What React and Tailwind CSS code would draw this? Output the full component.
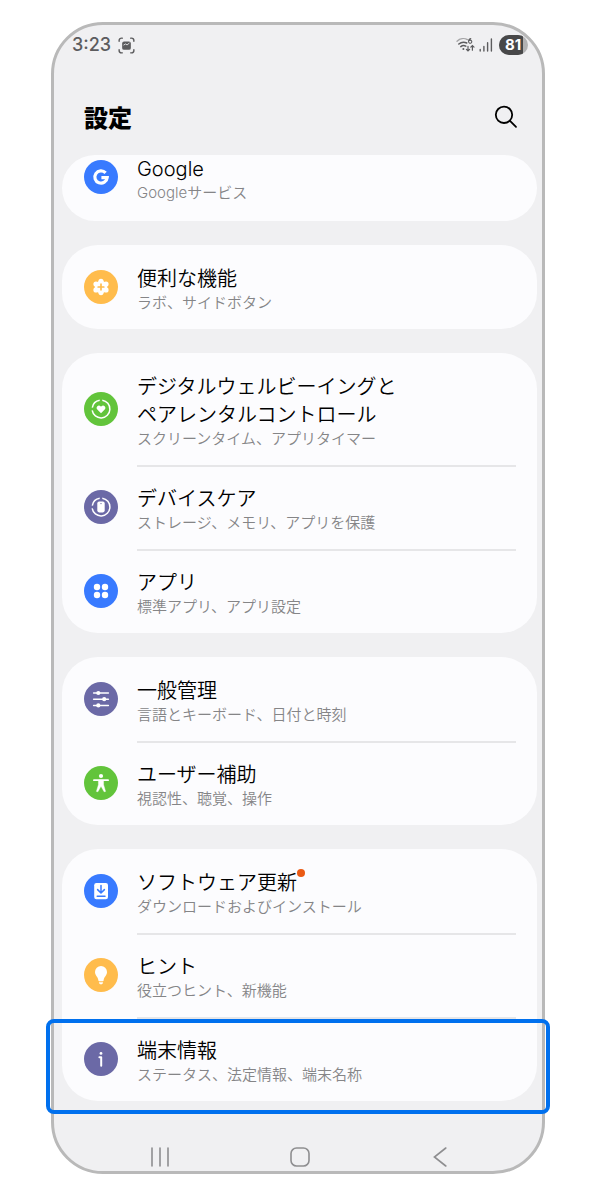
import React from 'react';

const BLUE = 'bg-[#387aff]';
const ORANGE = 'bg-[#ffbc4c]';
const GREEN = 'bg-[#62c43b]';
const PURPLE = 'bg-[#6b69a6]';

// all row icons are drawn on a 34x34 canvas, white on the coloured disc
const icons = {
  google: (
    <path d="M21.6 12.8A6.2 6.2 0 1 0 23.2 17.6H17.4" fill="none" stroke="#fff" strokeWidth="3.2" />
  ),
  features: (
    <g>
      <g fill="#fff">
        <circle cx="17" cy="11.4" r="2.6" />
        <circle cx="17" cy="22.6" r="2.6" />
        <circle cx="12" cy="14.1" r="2.6" />
        <circle cx="22" cy="14.1" r="2.6" />
        <circle cx="12" cy="19.9" r="2.6" />
        <circle cx="22" cy="19.9" r="2.6" />
        <circle cx="17" cy="17" r="6.2" />
      </g>
      <path d="M17 14.2v5.6M14.2 17h5.6" stroke="#ffbc4c" strokeWidth="1.7" strokeLinecap="round" />
    </g>
  ),
  wellbeing: (
    <g>
      <path d="M18.3 8.2A8.9 8.9 0 1 1 8.2 18.4M8.3 15.6A8.9 8.9 0 0 1 15.7 8.2" fill="none" stroke="#fff" strokeWidth="1.5" />
      <path d="M17 21.2l-3.7-3.6a2.3 2.3 0 0 1 0-3.3 2.3 2.3 0 0 1 3.3 0l.4.4.4-.4a2.3 2.3 0 0 1 3.3 0 2.3 2.3 0 0 1 0 3.3z" fill="#fff" />
    </g>
  ),
  care: (
    <g>
      <path d="M18.3 8.2A8.9 8.9 0 1 1 8.2 18.4M8.3 15.6A8.9 8.9 0 0 1 15.7 8.2" fill="none" stroke="#fff" strokeWidth="1.5" />
      <rect x="13.3" y="11.6" width="7.4" height="10.8" rx="1.8" fill="#fff" />
      <circle cx="17" cy="13.6" r="0.7" fill="#6b69a6" />
    </g>
  ),
  apps: (
    <g fill="#fff">
      <circle cx="13" cy="13" r="3.2" />
      <circle cx="21" cy="13" r="3.2" />
      <circle cx="13" cy="21" r="3.2" />
      <circle cx="21" cy="21" r="3.2" />
    </g>
  ),
  general: (
    <g>
      <path d="M9.6 11h14.8M9.6 17.2h14.8M9.6 23.4h14.8" stroke="#fff" strokeWidth="1.5" strokeLinecap="round" />
      <circle cx="14.3" cy="11" r="2.1" fill="#fff" />
      <circle cx="20.2" cy="17.2" r="2.1" fill="#fff" />
      <circle cx="14.3" cy="23.4" r="2.1" fill="#fff" />
    </g>
  ),
  accessibility: (
    <g>
      <circle cx="17" cy="10" r="2.1" fill="#fff" />
      <path d="M9.9 14.2h14.2" stroke="#fff" strokeWidth="1.7" strokeLinecap="round" />
      <path d="M14.4 14h5.2v4.8l2 6.6-1.5.4-3.1-5.6-3.1 5.6-1.5-.4 2-6.6z" fill="#fff" stroke="#fff" strokeWidth="0.4" strokeLinejoin="round" />
    </g>
  ),
  update: (
    <g>
      <rect x="10.2" y="9" width="13.8" height="16.2" rx="2.2" fill="#fff" />
      <path d="M17 11.6v7.2M13.6 15.6l3.4 3.4 3.4-3.4M13.2 22.2h7.8" fill="none" stroke="#387aff" strokeWidth="1.5" strokeLinecap="round" strokeLinejoin="round" />
    </g>
  ),
  tips: (
    <g fill="#fff">
      <path d="M17 8a6 6 0 0 0-6 6c0 3.6 3 4.6 3.4 8.6a.8.8 0 0 0 .8.7h3.6a.8.8 0 0 0 .8-.7c.4-4 3.4-5 3.4-8.6a6 6 0 0 0-6-6z" />
      <path d="M14.9 24.3h4.2a2.1 2.1 0 0 1-4.2 0z" />
    </g>
  ),
  about: (
    <g>
      <circle cx="17" cy="11.4" r="1.4" fill="#fff" />
      <path d="M15.4 15.2h1.8v8.6" fill="none" stroke="#fff" strokeWidth="2" strokeLinecap="round" strokeLinejoin="round" />
    </g>
  ),
};

const groups = [
  [{ id: 'google', color: BLUE, title: ['Google'], sub: 'Googleサービス' }],
  [{ id: 'features', color: ORANGE, title: ['便利な機能'], sub: 'ラボ、サイドボタン' }],
  [
    { id: 'wellbeing', color: GREEN, title: ['デジタルウェルビーイングと', 'ペアレンタルコントロール'], sub: 'スクリーンタイム、アプリタイマー' },
    { id: 'care', color: PURPLE, title: ['デバイスケア'], sub: 'ストレージ、メモリ、アプリを保護' },
    { id: 'apps', color: BLUE, title: ['アプリ'], sub: '標準アプリ、アプリ設定' },
  ],
  [
    { id: 'general', color: PURPLE, title: ['一般管理'], sub: '言語とキーボード、日付と時刻' },
    { id: 'accessibility', color: GREEN, title: ['ユーザー補助'], sub: '視認性、聴覚、操作' },
  ],
  [
    { id: 'update', color: BLUE, title: ['ソフトウェア更新'], sub: 'ダウンロードおよびインストール', badge: true },
    { id: 'tips', color: ORANGE, title: ['ヒント'], sub: '役立つヒント、新機能' },
    { id: 'about', color: PURPLE, title: ['端末情報'], sub: 'ステータス、法定情報、端末名称', highlight: true },
  ],
];

function Row({ item, divider }) {
  return (
    <li className="relative">
      <button className="flex w-full items-center gap-[19px] pl-[22px] pr-[21px] text-left">
        <span className={`size-[34px] shrink-0 rounded-full ${item.color}`}>
          <svg viewBox="0 0 34 34" className="size-full" aria-hidden="true">{icons[item.id]}</svg>
        </span>
        <span className={`flex-1 pb-4 ${divider ? 'border-t-2 border-[#e6e6e8] pt-[18px]' : 'pt-5'}`}>
          <span className="block text-xl leading-7 text-black">
            {item.title.map((line) => (
              <span key={line} className="block">
                <span className="relative">
                  {line}
                  {item.badge && <span className="absolute -right-2 -top-0.5 size-2 rounded-full bg-[#ea5a14]" />}
                </span>
              </span>
            ))}
          </span>
          <span className="block text-[15px] leading-5 text-[#858587]">{item.sub}</span>
        </span>
      </button>
      {item.highlight && (
        <span className="pointer-events-none absolute -bottom-[13px] -left-4 -right-[13px] top-0.5 rounded-lg border-4 border-[#0070ee]" />
      )}
    </li>
  );
}

function StatusBar() {
  return (
    <div className="flex h-10 items-center justify-between pl-[18px] pr-[14px] text-[#5c5c5e]">
      <div className="flex items-center gap-[7px]">
        <span className="text-lg font-medium leading-5">3:23</span>
        <svg viewBox="0 0 18 18" className="size-[17px]" fill="none" stroke="currentColor" strokeWidth="1.5" strokeLinecap="round" aria-hidden="true">
          <path d="M1.2 4.6V3.8a2.6 2.6 0 0 1 2.6-2.6h.8M13.4 1.2h.8a2.6 2.6 0 0 1 2.6 2.6v.8M16.8 13.4v.8a2.6 2.6 0 0 1-2.6 2.6h-.8M4.6 16.8h-.8a2.6 2.6 0 0 1-2.6-2.6v-.8" />
          <rect x="4.4" y="4.8" width="9.2" height="8.8" rx="2" fill="currentColor" stroke="none" />
          <path d="M6.2 8.4l1.8-1 1.6 1 2.2-1.8" stroke="#f0f0f2" strokeWidth="0.9" />
        </svg>
      </div>
      <div className="flex items-center gap-1">
        <svg viewBox="0 0 19 16" className="h-4 w-[19px]" fill="none" stroke="currentColor" strokeLinecap="round" aria-hidden="true">
          <path d="M1 4.2C4 1.4 8.4 1 11.4 2.6" strokeWidth="1.3" opacity="0.5" />
          <path d="M2.8 7a7.4 7.4 0 0 1 8-1M4.8 9.6a4.6 4.6 0 0 1 5-.4" strokeWidth="1.5" />
          <circle cx="7.4" cy="12" r="1" fill="currentColor" stroke="none" />
          <path d="M14.8 1.6c-2 .2-2.4 2-2.2 3.4a1.6 1.6 0 1 0 .4-1.4" strokeWidth="1.1" />
          <path d="M12 9.4v4.4M10.4 12.4l1.6 1.6 1.6-1.6M16.4 13.2V8.8M14.8 10.2l1.6-1.6L18 10.2" strokeWidth="1.2" />
        </svg>
        <svg viewBox="0 0 14 14" className="size-[14px]" stroke="currentColor" strokeWidth="1.4" strokeLinecap="round" aria-hidden="true">
          <path d="M1.2 11.4v1.6M4.9 8.4V13M8.6 4.8V13M12.4 1V13" />
        </svg>
        <span className="ml-0.5 h-5 w-[29px] overflow-hidden rounded-full bg-[#b2b2b3]">
          <span className="block w-6 bg-[#484849] pl-1.5 text-[15px] font-bold leading-5 text-white">81</span>
        </span>
      </div>
    </div>
  );
}

function NavBar() {
  return (
    <nav className="flex h-[70px] justify-center gap-[120px] pl-1 pt-[46px] text-[#8e8e90]">
      <button aria-label="Recents" className="size-5">
        <svg viewBox="0 0 20 20" className="size-5" stroke="currentColor" strokeWidth="1.6" strokeLinecap="round"><path d="M2 1v18M10 1v18M18 1v18" /></svg>
      </button>
      <button aria-label="Home" className="size-5">
        <svg viewBox="0 0 20 20" className="size-5" fill="none" stroke="currentColor" strokeWidth="1.6"><rect x="1" y="1" width="18" height="18" rx="5.6" /></svg>
      </button>
      <button aria-label="Back" className="size-5">
        <svg viewBox="0 0 20 20" className="size-5" fill="none" stroke="currentColor" strokeWidth="1.6" strokeLinecap="round"><path d="M15.8 1L4.4 10l11.4 9" /></svg>
      </button>
    </nav>
  );
}

export default function App() {
  return (
    <div className="bg-white pb-[26px] pl-[51px] pr-[55px] pt-[22px] font-['Inter','Noto_Sans_CJK_JP',sans-serif]">
      <div className="rounded-[52px] border-[3px] border-[#b9b9b9] bg-[#f0f0f2]">
        <StatusBar />
        <header className="flex h-[90px] items-center justify-between pl-[30px] pr-6 pt-[14px]">
          <h1 className="pt-1 text-2xl font-black text-black">設定</h1>
          <button aria-label="検索" className="size-6">
            <svg viewBox="0 0 24 24" className="size-6" fill="none" stroke="#000" strokeWidth="1.8" strokeLinecap="round">
              <circle cx="10" cy="9.8" r="8.2" />
              <path d="M16 15.8l6 6" />
            </svg>
          </button>
        </header>
        <main className="flex flex-col gap-6 pl-2 pr-[5px] font-[350]">
          {groups.map((group, g) => (
            <div key={g} className={`rounded-[36px] bg-[#fcfcfe] ${g === 0 ? 'overflow-hidden' : ''}`}>
              {/* first group is partly scrolled under the header */}
              <ul className={g === 0 ? '-mt-5 pb-0.5' : ''}>
                {group.map((item, i) => (
                  <Row key={item.id} item={item} divider={i > 0} />
                ))}
              </ul>
            </div>
          ))}
        </main>
        <NavBar />
      </div>
    </div>
  );
}
